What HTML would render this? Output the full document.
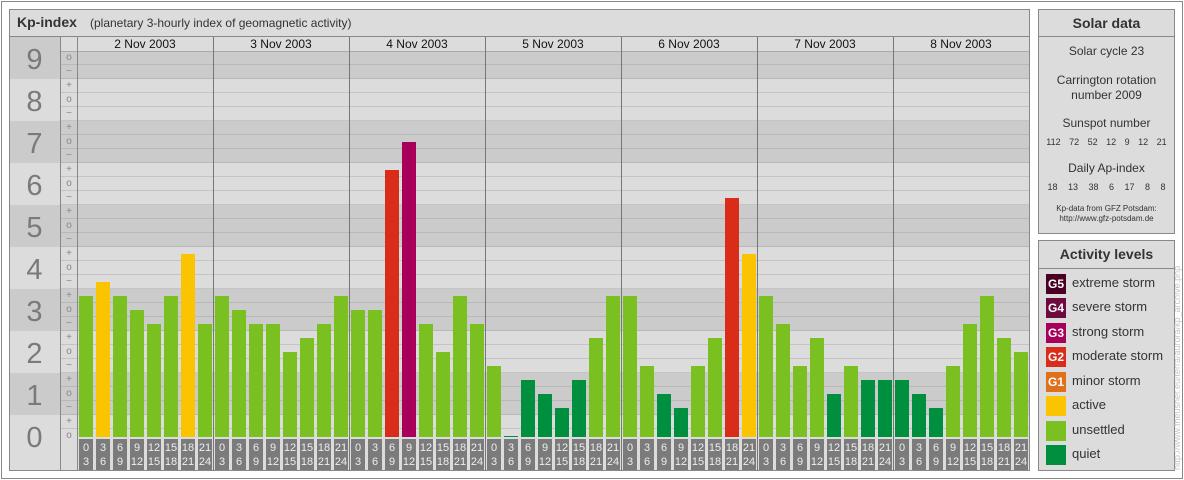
<!DOCTYPE html><html><head><meta charset="utf-8"><style>
*{margin:0;padding:0;box-sizing:border-box}
body{width:1184px;height:480px;background:#fff;position:relative;overflow:hidden;font-family:"Liberation Sans",sans-serif}
.a{position:absolute}
.b{position:absolute;width:14px}
.l{position:absolute;top:439px;width:14px;height:31px;background:#7b7b7b;color:#eee;font-size:11px;text-align:center;line-height:14px;padding-top:2px}
.n{position:absolute;left:9px;width:51px;text-align:center;font-size:29px;color:#7a7a7a;height:34px;line-height:34px}
.t{position:absolute;left:61px;width:16px;text-align:center;font-size:10px;color:#888;height:14px;line-height:14px}
.d{position:absolute;top:37px;width:136px;text-align:center;font-size:12px;color:#111;line-height:14px}
.g{position:absolute;left:1046px;width:20px;height:20px;color:#fff;font-size:12px;font-weight:bold;line-height:20px;text-align:center}
.gl{position:absolute;left:1072px;font-size:13px;color:#333;line-height:20px}
.s{position:absolute;left:1039px;width:135px;text-align:center;color:#333}
</style></head><body>
<div class="a" style="left:1px;top:1px;width:1182px;height:478px;border:1px solid #888"></div>
<!-- main panel -->
<div class="a" style="left:9px;top:9px;width:1021px;height:462px;background:#dcdcdc;border:1px solid #888"></div>
<div class="a" style="left:10px;top:36px;width:1019px;height:1px;background:#888"></div>
<div class="a" style="left:17px;top:14px;font-size:14px;font-weight:bold;color:#333">Kp-index</div>
<div class="a" style="left:90px;top:16px;font-size:12px;color:#333">(planetary 3-hourly index of geomagnetic activity)</div>
<!-- bands -->
<div class="a" style="left:10px;top:37px;width:51px;height:42px;background:#cbcbcb"></div>
<div class="a" style="left:10px;top:51px;width:1019px;height:28px;background:#cbcbcb"></div>
<div class="a" style="left:10px;top:121px;width:1019px;height:42px;background:#cbcbcb"></div>
<div class="a" style="left:10px;top:205px;width:1019px;height:42px;background:#cbcbcb"></div>
<div class="a" style="left:10px;top:289px;width:1019px;height:42px;background:#cbcbcb"></div>
<div class="a" style="left:10px;top:373px;width:1019px;height:42px;background:#cbcbcb"></div>
<div class="a" style="left:61px;top:51px;width:968px;height:386px;background:repeating-linear-gradient(to bottom,transparent 0,transparent 13px,rgba(150,150,150,.35) 13px,rgba(150,150,150,.35) 14px)"></div>
<div class="a" style="left:61px;top:51px;width:968px;height:1px;background:#aaa"></div>
<!-- vertical lines -->
<div class="a" style="left:60px;top:37px;width:1px;height:434px;background:#888"></div>
<div class="a" style="left:77px;top:37px;width:1px;height:434px;background:#888"></div>
<div class="a" style="left:213px;top:37px;width:1px;height:434px;background:#777"></div>
<div class="a" style="left:349px;top:37px;width:1px;height:434px;background:#777"></div>
<div class="a" style="left:485px;top:37px;width:1px;height:434px;background:#777"></div>
<div class="a" style="left:621px;top:37px;width:1px;height:434px;background:#777"></div>
<div class="a" style="left:757px;top:37px;width:1px;height:434px;background:#777"></div>
<div class="a" style="left:893px;top:37px;width:1px;height:434px;background:#777"></div>
<!-- numerals -->
<div class="n" style="top:43px">9</div><div class="n" style="top:85px">8</div><div class="n" style="top:127px">7</div><div class="n" style="top:169px">6</div><div class="n" style="top:211px">5</div><div class="n" style="top:253px">4</div><div class="n" style="top:295px">3</div><div class="n" style="top:337px">2</div><div class="n" style="top:379px">1</div><div class="n" style="top:421px">0</div>
<!-- ticks -->
<div class="t" style="top:51px">o</div><div class="t" style="top:65px">−</div>
<div class="t" style="top:79px">+</div><div class="t" style="top:93px">o</div><div class="t" style="top:107px">−</div>
<div class="t" style="top:121px">+</div><div class="t" style="top:135px">o</div><div class="t" style="top:149px">−</div>
<div class="t" style="top:163px">+</div><div class="t" style="top:177px">o</div><div class="t" style="top:191px">−</div>
<div class="t" style="top:205px">+</div><div class="t" style="top:219px">o</div><div class="t" style="top:233px">−</div>
<div class="t" style="top:247px">+</div><div class="t" style="top:261px">o</div><div class="t" style="top:275px">−</div>
<div class="t" style="top:289px">+</div><div class="t" style="top:303px">o</div><div class="t" style="top:317px">−</div>
<div class="t" style="top:331px">+</div><div class="t" style="top:345px">o</div><div class="t" style="top:359px">−</div>
<div class="t" style="top:373px">+</div><div class="t" style="top:387px">o</div><div class="t" style="top:401px">−</div>
<div class="t" style="top:415px">+</div><div class="t" style="top:429px">o</div>
<!-- dates -->
<div class="d" style="left:77px">2 Nov 2003</div><div class="d" style="left:213px">3 Nov 2003</div><div class="d" style="left:349px">4 Nov 2003</div><div class="d" style="left:485px">5 Nov 2003</div><div class="d" style="left:621px">6 Nov 2003</div><div class="d" style="left:757px">7 Nov 2003</div><div class="d" style="left:893px">8 Nov 2003</div>
<!-- bars day1 -->
<div class="b" style="left:79px;top:296px;height:141px;background:#7bc021"></div>
<div class="b" style="left:96px;top:282px;height:155px;background:#fac400"></div>
<div class="b" style="left:113px;top:296px;height:141px;background:#7bc021"></div>
<div class="b" style="left:130px;top:310px;height:127px;background:#7bc021"></div>
<div class="b" style="left:147px;top:324px;height:113px;background:#7bc021"></div>
<div class="b" style="left:164px;top:296px;height:141px;background:#7bc021"></div>
<div class="b" style="left:181px;top:254px;height:183px;background:#fac400"></div>
<div class="b" style="left:198px;top:324px;height:113px;background:#7bc021"></div>
<!-- day2 -->
<div class="b" style="left:215px;top:296px;height:141px;background:#7bc021"></div>
<div class="b" style="left:232px;top:310px;height:127px;background:#7bc021"></div>
<div class="b" style="left:249px;top:324px;height:113px;background:#7bc021"></div>
<div class="b" style="left:266px;top:324px;height:113px;background:#7bc021"></div>
<div class="b" style="left:283px;top:352px;height:85px;background:#7bc021"></div>
<div class="b" style="left:300px;top:338px;height:99px;background:#7bc021"></div>
<div class="b" style="left:317px;top:324px;height:113px;background:#7bc021"></div>
<div class="b" style="left:334px;top:296px;height:141px;background:#7bc021"></div>
<!-- day3 -->
<div class="b" style="left:351px;top:310px;height:127px;background:#7bc021"></div>
<div class="b" style="left:368px;top:310px;height:127px;background:#7bc021"></div>
<div class="b" style="left:385px;top:170px;height:267px;background:#d92d1a"></div>
<div class="b" style="left:402px;top:142px;height:295px;background:#a8005a"></div>
<div class="b" style="left:419px;top:324px;height:113px;background:#7bc021"></div>
<div class="b" style="left:436px;top:352px;height:85px;background:#7bc021"></div>
<div class="b" style="left:453px;top:296px;height:141px;background:#7bc021"></div>
<div class="b" style="left:470px;top:324px;height:113px;background:#7bc021"></div>
<!-- day4 -->
<div class="b" style="left:487px;top:366px;height:71px;background:#7bc021"></div>
<div class="b" style="left:504px;top:436px;height:1px;background:#008f3e"></div>
<div class="b" style="left:521px;top:380px;height:57px;background:#008f3e"></div>
<div class="b" style="left:538px;top:394px;height:43px;background:#008f3e"></div>
<div class="b" style="left:555px;top:408px;height:29px;background:#008f3e"></div>
<div class="b" style="left:572px;top:380px;height:57px;background:#008f3e"></div>
<div class="b" style="left:589px;top:338px;height:99px;background:#7bc021"></div>
<div class="b" style="left:606px;top:296px;height:141px;background:#7bc021"></div>
<!-- day5 -->
<div class="b" style="left:623px;top:296px;height:141px;background:#7bc021"></div>
<div class="b" style="left:640px;top:366px;height:71px;background:#7bc021"></div>
<div class="b" style="left:657px;top:394px;height:43px;background:#008f3e"></div>
<div class="b" style="left:674px;top:408px;height:29px;background:#008f3e"></div>
<div class="b" style="left:691px;top:366px;height:71px;background:#7bc021"></div>
<div class="b" style="left:708px;top:338px;height:99px;background:#7bc021"></div>
<div class="b" style="left:725px;top:198px;height:239px;background:#d92d1a"></div>
<div class="b" style="left:742px;top:254px;height:183px;background:#fac400"></div>
<!-- day6 -->
<div class="b" style="left:759px;top:296px;height:141px;background:#7bc021"></div>
<div class="b" style="left:776px;top:324px;height:113px;background:#7bc021"></div>
<div class="b" style="left:793px;top:366px;height:71px;background:#7bc021"></div>
<div class="b" style="left:810px;top:338px;height:99px;background:#7bc021"></div>
<div class="b" style="left:827px;top:394px;height:43px;background:#008f3e"></div>
<div class="b" style="left:844px;top:366px;height:71px;background:#7bc021"></div>
<div class="b" style="left:861px;top:380px;height:57px;background:#008f3e"></div>
<div class="b" style="left:878px;top:380px;height:57px;background:#008f3e"></div>
<!-- day7 -->
<div class="b" style="left:895px;top:380px;height:57px;background:#008f3e"></div>
<div class="b" style="left:912px;top:394px;height:43px;background:#008f3e"></div>
<div class="b" style="left:929px;top:408px;height:29px;background:#008f3e"></div>
<div class="b" style="left:946px;top:366px;height:71px;background:#7bc021"></div>
<div class="b" style="left:963px;top:324px;height:113px;background:#7bc021"></div>
<div class="b" style="left:980px;top:296px;height:141px;background:#7bc021"></div>
<div class="b" style="left:997px;top:338px;height:99px;background:#7bc021"></div>
<div class="b" style="left:1014px;top:352px;height:85px;background:#7bc021"></div>
<!-- labels -->
<div class="l" style="left:79px">0<br>3</div><div class="l" style="left:96px">3<br>6</div><div class="l" style="left:113px">6<br>9</div><div class="l" style="left:130px">9<br>12</div><div class="l" style="left:147px">12<br>15</div><div class="l" style="left:164px">15<br>18</div><div class="l" style="left:181px">18<br>21</div><div class="l" style="left:198px">21<br>24</div>
<div class="l" style="left:215px">0<br>3</div><div class="l" style="left:232px">3<br>6</div><div class="l" style="left:249px">6<br>9</div><div class="l" style="left:266px">9<br>12</div><div class="l" style="left:283px">12<br>15</div><div class="l" style="left:300px">15<br>18</div><div class="l" style="left:317px">18<br>21</div><div class="l" style="left:334px">21<br>24</div>
<div class="l" style="left:351px">0<br>3</div><div class="l" style="left:368px">3<br>6</div><div class="l" style="left:385px">6<br>9</div><div class="l" style="left:402px">9<br>12</div><div class="l" style="left:419px">12<br>15</div><div class="l" style="left:436px">15<br>18</div><div class="l" style="left:453px">18<br>21</div><div class="l" style="left:470px">21<br>24</div>
<div class="l" style="left:487px">0<br>3</div><div class="l" style="left:504px">3<br>6</div><div class="l" style="left:521px">6<br>9</div><div class="l" style="left:538px">9<br>12</div><div class="l" style="left:555px">12<br>15</div><div class="l" style="left:572px">15<br>18</div><div class="l" style="left:589px">18<br>21</div><div class="l" style="left:606px">21<br>24</div>
<div class="l" style="left:623px">0<br>3</div><div class="l" style="left:640px">3<br>6</div><div class="l" style="left:657px">6<br>9</div><div class="l" style="left:674px">9<br>12</div><div class="l" style="left:691px">12<br>15</div><div class="l" style="left:708px">15<br>18</div><div class="l" style="left:725px">18<br>21</div><div class="l" style="left:742px">21<br>24</div>
<div class="l" style="left:759px">0<br>3</div><div class="l" style="left:776px">3<br>6</div><div class="l" style="left:793px">6<br>9</div><div class="l" style="left:810px">9<br>12</div><div class="l" style="left:827px">12<br>15</div><div class="l" style="left:844px">15<br>18</div><div class="l" style="left:861px">18<br>21</div><div class="l" style="left:878px">21<br>24</div>
<div class="l" style="left:895px">0<br>3</div><div class="l" style="left:912px">3<br>6</div><div class="l" style="left:929px">6<br>9</div><div class="l" style="left:946px">9<br>12</div><div class="l" style="left:963px">12<br>15</div><div class="l" style="left:980px">15<br>18</div><div class="l" style="left:997px">18<br>21</div><div class="l" style="left:1014px">21<br>24</div>
<!-- Solar data -->
<div class="a" style="left:1038px;top:9px;width:137px;height:225px;background:#dcdcdc;border:1px solid #888"></div>
<div class="a" style="left:1039px;top:36px;width:135px;height:1px;background:#888"></div>
<div class="s" style="top:15px;font-size:14px;font-weight:bold">Solar data</div>
<div class="s" style="top:44px;font-size:12px">Solar cycle 23</div>
<div class="s" style="top:73px;font-size:12px;line-height:15px">Carrington rotation<br>number 2009</div>
<div class="s" style="top:116px;font-size:12px">Sunspot number</div>
<div class="s" style="top:137px;font-size:9px;word-spacing:6px">112 72 52 12 9 12 21</div>
<div class="s" style="top:161px;font-size:12px">Daily Ap-index</div>
<div class="s" style="top:182px;font-size:9px;word-spacing:8px">18 13 38 6 17 8 8</div>
<div class="s" style="top:204px;font-size:8px;line-height:10px">Kp-data from GFZ Potsdam:<br>http://www.gfz-potsdam.de</div>
<!-- Activity -->
<div class="a" style="left:1038px;top:240px;width:137px;height:231px;background:#dcdcdc;border:1px solid #888"></div>
<div class="a" style="left:1039px;top:268px;width:135px;height:1px;background:#888"></div>
<div class="s" style="top:246px;font-size:14px;font-weight:bold">Activity levels</div>
<div class="g" style="top:274px;background:#4a0024">G5</div><div class="gl" style="top:273px">extreme storm</div>
<div class="g" style="top:298px;background:#6e0a3e">G4</div><div class="gl" style="top:297px">severe storm</div>
<div class="g" style="top:323px;background:#a8005a">G3</div><div class="gl" style="top:322px">strong storm</div>
<div class="g" style="top:347px;background:#d92d1a">G2</div><div class="gl" style="top:346px">moderate storm</div>
<div class="g" style="top:372px;background:#e0701a">G1</div><div class="gl" style="top:371px">minor storm</div>
<div class="g" style="top:396px;background:#fac400"></div><div class="gl" style="top:395px">active</div>
<div class="g" style="top:421px;background:#7bc021"></div><div class="gl" style="top:420px">unsettled</div>
<div class="g" style="top:445px;background:#008f3e"></div><div class="gl" style="top:444px">quiet</div>
<div class="a" style="left:1172px;top:470px;transform-origin:0 0;transform:rotate(-90deg);font-size:9px;color:#c4c4c4;white-space:nowrap;width:230px">http://www.fheusner.eu/terra/aurora/kp_archive.php</div>
</body></html>
